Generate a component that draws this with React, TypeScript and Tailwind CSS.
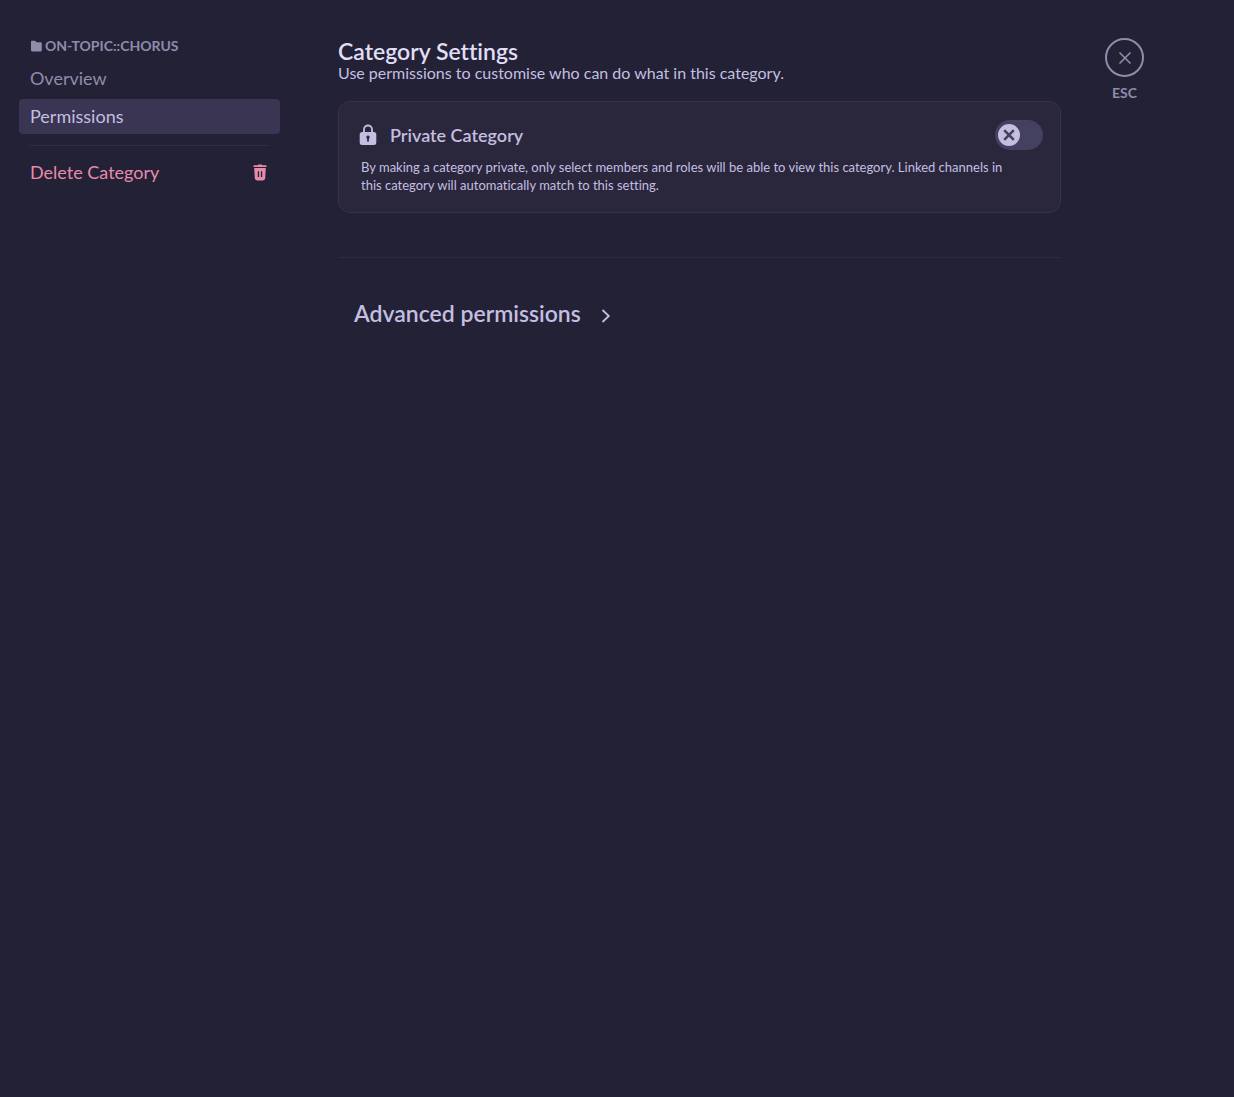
import React, { useState } from 'react'

const NAV_ITEMS = ['Overview', 'Permissions']

export default function App() {
  const [page, setPage] = useState('Permissions')

  return (
    <div className="flex min-h-screen bg-[#232136] pl-[19px] pr-[90px] pt-[38px] font-['Lato',sans-serif] text-[#c4bfe0] [font-variant-ligatures:none]">
      <Sidebar page={page} onSelect={setPage} />
      <main className="ml-[58px] mr-11 min-w-0 flex-1">
        <h1 className="text-[23px] font-semibold leading-[26px] text-[#e0def4]">Category Settings</h1>
        <p className="text-[16px] leading-[18px]">Use permissions to customise who can do what in this category.</p>
        <PrivateCard />
        <hr className="mt-11 border-[#2d2a41]" />
        <button type="button" className="ml-4 mt-[39px] flex items-center gap-5 text-[23px] font-semibold leading-8">
          Advanced permissions
          <svg viewBox="0 0 10 14" className="mt-[5px] h-[14px] w-[10px]" fill="none" stroke="currentColor" strokeWidth="1.8">
            <path d="M1.5 1 7.8 7 1.5 13" />
          </svg>
        </button>
      </main>
      <CloseButton />
    </div>
  )
}

function Sidebar({ page, onSelect }: { page: string; onSelect: (name: string) => void }) {
  return (
    <nav className="w-[261px] shrink-0">
      <h2 className="flex h-4 items-center gap-[3px] pl-[11px] text-[14px] font-bold leading-4 text-[#908caa]">
        <FolderIcon />
        ON-TOPIC::CHORUS
      </h2>
      <ul className="mt-[7px] flex flex-col gap-[3px]">
        {NAV_ITEMS.map((name) => (
          <li key={name}>
            <button
              type="button"
              onClick={() => onSelect(name)}
              className={
                name === page
                  ? 'h-[35px] w-full rounded bg-[#393552] pl-[11px] text-left text-[18px] text-[#c4bfe0]'
                  : 'h-[35px] w-full rounded pl-[11px] text-left text-[18px] text-[#908caa]'
              }
            >
              {name}
            </button>
          </li>
        ))}
      </ul>
      <hr className="mx-[11px] mt-[11px] border-[#2f2c43]" />
      <button
        type="button"
        className="mt-[9px] flex h-[35px] w-full items-center justify-between pl-[11px] pr-[13px] text-[18px] text-[#e88bab]"
      >
        Delete Category
        <TrashIcon />
      </button>
    </nav>
  )
}

function PrivateCard() {
  const [isPrivate, setIsPrivate] = useState(false)

  return (
    <section className="mt-[19px] rounded-xl border border-[#35324a] bg-[#2a273c] pb-[18px] pl-[20px] pr-[17px] pt-[18px]">
      <div className="flex h-[30px] items-center">
        <LockIcon />
        <label htmlFor="private" className="ml-[13px] text-[18px] font-semibold">
          Private Category
        </label>
        <span className="relative ml-auto flex h-[30px] w-12">
          <input
            id="private"
            type="checkbox"
            role="switch"
            checked={isPrivate}
            onChange={(e) => setIsPrivate(e.target.checked)}
            className="peer h-full w-full cursor-pointer appearance-none rounded-full bg-[#44405f]"
          />
          <svg
            viewBox="0 0 22 22"
            className="pointer-events-none absolute left-[3px] top-1 h-[22px] w-[22px] peer-checked:left-[23px]"
          >
            <circle cx="11" cy="11" r="11" fill="#c4bfe0" />
            <path d="m6.2 6.2 9.600 9.600m0-9.600-9.600 9.600" stroke="#44405f" strokeWidth="2.6" />
          </svg>
        </span>
      </div>
      <p className="ml-[2px] mr-5 mt-2 text-[13px] leading-[18px]">
        By making a category private, only select members and roles will be able to view this category. Linked channels in
        this category will automatically match to this setting.
      </p>
    </section>
  )
}

function CloseButton() {
  return (
    <button type="button" className="flex w-[39px] shrink-0 flex-col items-center self-start text-[#908caa]">
      <span className="flex h-[39px] w-[39px] items-center justify-center rounded-full border-2 border-[#908caa]">
        <svg viewBox="0 0 14 14" className="h-[14px] w-[14px]" stroke="currentColor" strokeWidth="1.6">
          <path d="m1.5 1.5 11 11m0-11-11 11" />
        </svg>
      </span>
      <span className="mt-[7px] text-[14px] font-bold leading-[18px]">ESC</span>
    </button>
  )
}

function FolderIcon() {
  return (
    <svg viewBox="0 0 12 12" className="h-3 w-3" fill="currentColor">
      <path d="M2.200.7h2.400c.5 0 .8.2 1.100.6l.8 1h4.100c.7 0 1.200.5 1.200 1.200v6.800c0 .7-.5 1.200-1.200 1.200H2.200c-.7 0-1.200-.5-1.200-1.200V1.900C1 1.200 1.500.7 2.200.7Z" />
    </svg>
  )
}

function LockIcon() {
  return (
    <svg viewBox="0 0 18 22" className="h-[22px] w-[18px]">
      <path d="M5 10V5.500a4 4 0 0 1 8 0V10" fill="none" stroke="currentColor" strokeWidth="1.800" />
      <path
        fill="currentColor"
        fillRule="evenodd"
        d="M3.200 8h11.600A2.500 2.500 0 0 1 17.300 10.500v8a2.500 2.500 0 0 1-2.500 2.500h-11.600A2.500 2.500 0 0 1 .7 18.500v-8A2.500 2.500 0 0 1 3.200 8ZM9 11.500a1.800 1.800 0 0 0-.9 3.300V17.500h1.800v-2.700A1.800 1.800 0 0 0 9 11.500Z"
      />
    </svg>
  )
}

function TrashIcon() {
  return (
    <svg viewBox="0 0 14 17" className="h-[17px] w-[14px]" fill="currentColor">
      <path d="M4.800 1.300 5.300.5h3.400l.5.8h4.300v1.700H.5V1.300Z" />
      <path
        fillRule="evenodd"
        d="M1.200 4h11.600l-.6 10c-.1 1.600-1 2.500-2.500 2.500H4.300c-1.500 0-2.400-.9-2.500-2.500ZM4.800 7.300v5.700h1.300V7.300Zm3.100 0v5.700h1.300V7.300Z"
      />
    </svg>
  )
}
